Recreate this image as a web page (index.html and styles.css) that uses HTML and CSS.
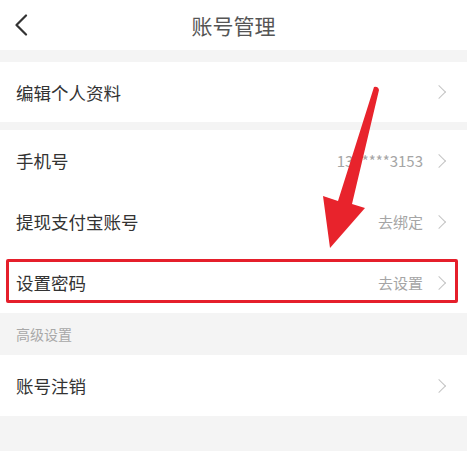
FILE: index.html
```html
<!DOCTYPE html>
<html lang="zh-CN">
<head>
    <meta charset="UTF-8">
    <meta name="viewport" content="width=device-width, initial-scale=1.0">
    <title>账号管理</title>
    <link rel="stylesheet" href="styles.css">
</head>
<body>
    <div class="page">
        <div class="top-bar">
            <span class="back">
                <svg width="14" height="22" viewBox="0 0 14 22"><path d="M12 1.5 L2.5 11 L12 20.5" fill="none" stroke="#333" stroke-width="2.2" stroke-linecap="round" stroke-linejoin="round"/></svg>
            </span>
            <h1 class="title">账号管理</h1>
        </div>

        <div class="gap"></div>
        <div class="group">
            <div class="row short">
                <span class="label">编辑个人资料</span>
                <span class="arrow-right"></span>
            </div>
        </div>

        <div class="gap small"></div>
        <div class="group">
            <div class="row">
                <span class="label">手机号</span>
                <span class="value">135****3153</span>
                <span class="arrow-right"></span>
            </div>
            <div class="row">
                <span class="label">提现支付宝账号</span>
                <span class="value">去绑定</span>
                <span class="arrow-right"></span>
            </div>
            <div class="row marked">
                <span class="label">设置密码</span>
                <span class="value">去设置</span>
                <span class="arrow-right"></span>
            </div>
        </div>

        <div class="section-title">高级设置</div>
        <div class="group">
            <div class="row">
                <span class="label">账号注销</span>
                <span class="arrow-right"></span>
            </div>
        </div>

        <!-- 标注箭头 -->
        <svg class="hint-arrow" width="467" height="451" viewBox="0 0 467 451">
            <path d="M374 87 Q378 86 379 90 L352 204 L365 208 L330 248 L323 196 L338 201 Z" fill="#e8232c"/>
        </svg>
    </div>
</body>
</html>
```

FILE: styles.css
```css
body {
    margin: 0;
    background: #f4f4f4;
    font-family: "Noto Sans CJK SC", "Noto Sans", sans-serif;
}
.page {
    position: relative;
    width: 467px;
    height: 451px;
    overflow: hidden;
}
.top-bar {
    height: 50px;
    background: #fff;
    display: flex;
    align-items: center;
    justify-content: center;
    position: relative;
}
.back {
    position: absolute;
    left: 14px;
    top: 14px;
}
.title {
    margin: 0;
    font-size: 21px;
    font-weight: normal;
    color: #555;
}
.gap {
    height: 12px;
}
.gap.small {
    height: 8px;
}
.group {
    background: #fff;
}
.row {
    height: 61px;
    display: flex;
    align-items: center;
    padding: 0 23px 0 16px;
    position: relative;
}
.row.short {
    height: 60px;
}
.label {
    flex: 1;
    font-size: 17.5px;
    color: #333;
}
.value {
    font-size: 15px;
    color: #a5a5a5;
    margin-right: 11px;
}
.arrow-right {
    width: 9px;
    height: 9px;
    border-top: 1.5px solid #c4c4c4;
    border-right: 1.5px solid #c4c4c4;
    transform: rotate(45deg);
}
.marked::after {
    content: "";
    position: absolute;
    left: 6px;
    right: 9px;
    top: 7px;
    bottom: 10px;
    border: 3px solid #e51f2b;
    border-radius: 2px;
}
.section-title {
    height: 42px;
    line-height: 42px;
    padding-left: 16px;
    font-size: 14px;
    color: #a8a8a8;
}
.hint-arrow {
    position: absolute;
    left: 0;
    top: 0;
    pointer-events: none;
}
```
